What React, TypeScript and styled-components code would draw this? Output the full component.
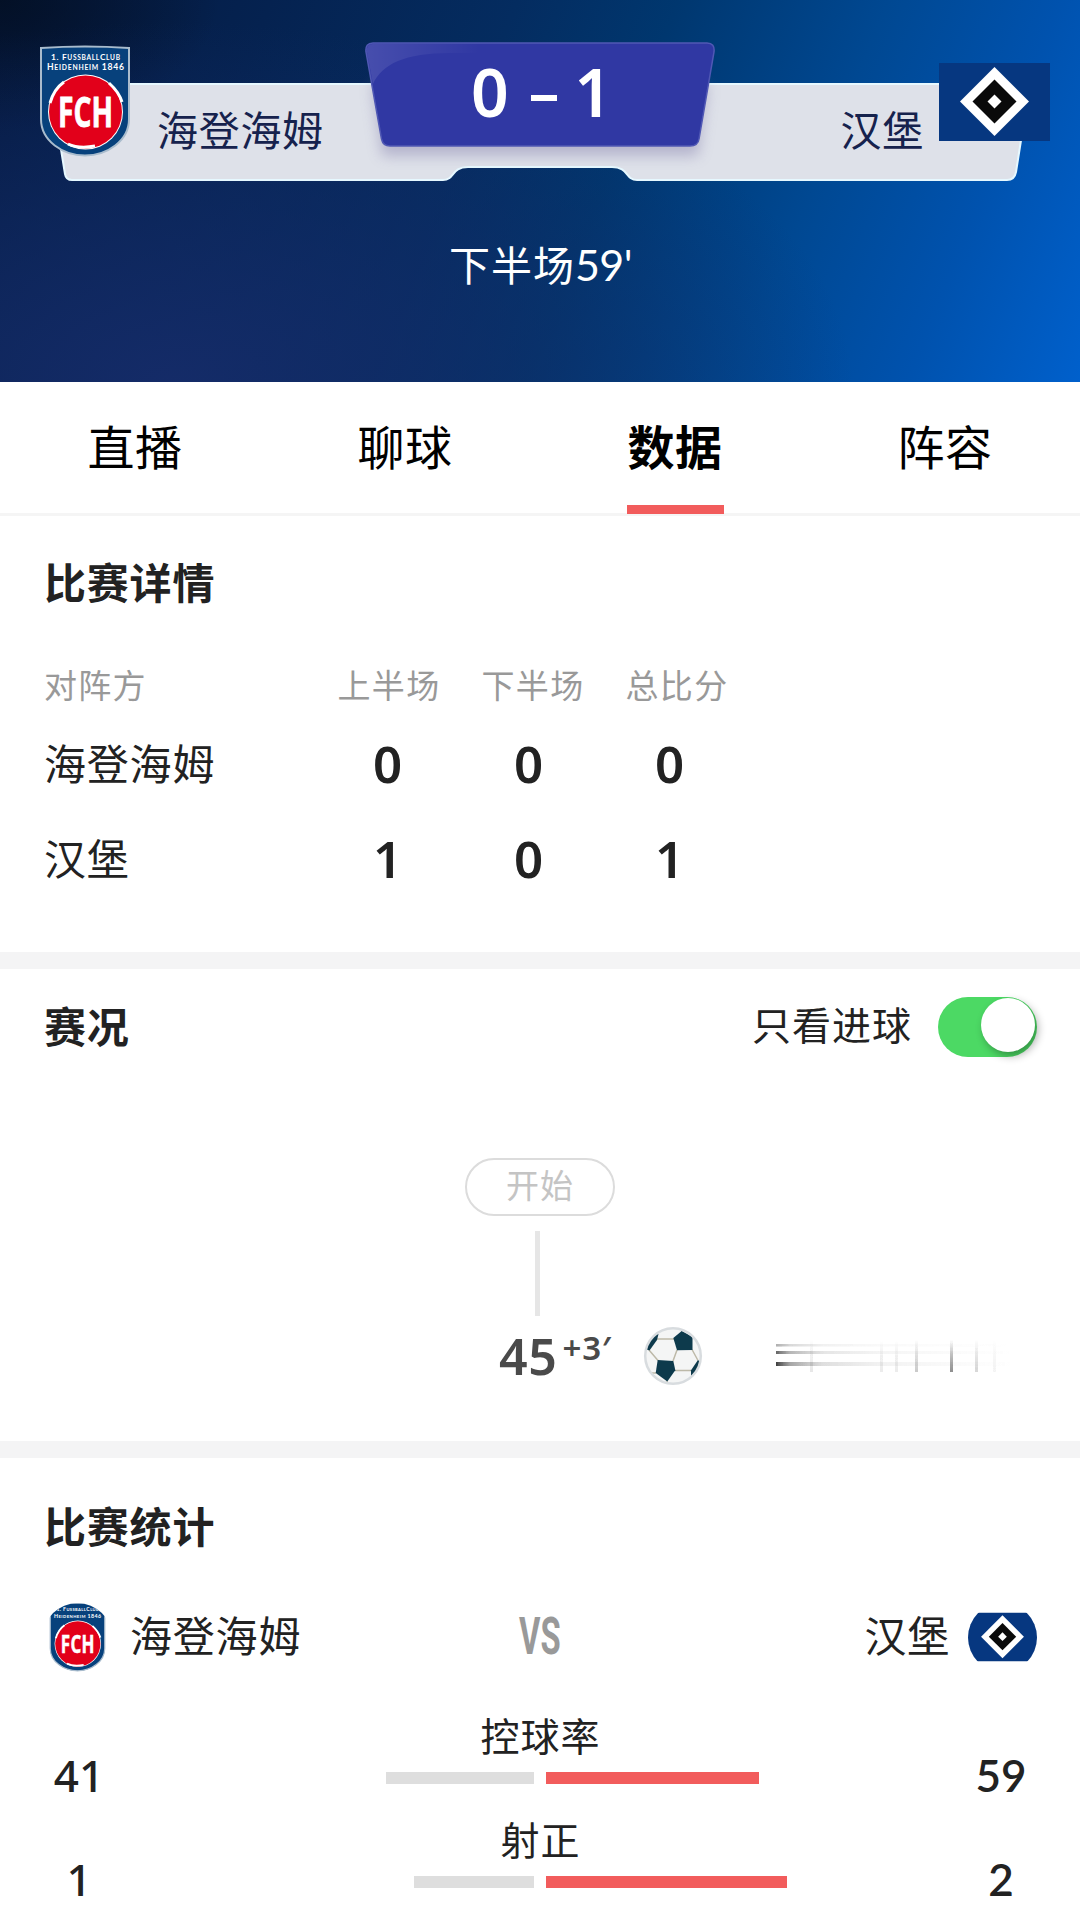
import { useState } from "react";
import styled, { createGlobalStyle } from "styled-components";

const GlobalStyle = createGlobalStyle`
  * {
    box-sizing: border-box;
  }

  body {
    margin: 0;
    background: #fff;
    color: #222;
    font-family: "Noto Sans", "Noto Sans CJK SC", sans-serif;
  }
`;

const HAN = `"Noto Sans CJK SC", sans-serif`;
const DIGITS = `"Noto Sans", "Open Sans", sans-serif`;

const Page = styled.div`
  width: 1080px;
  height: 1916px;
  overflow: hidden;
  background: #fff;
`;

/* header */

const Header = styled.header`
  height: 382px;
  background: radial-gradient(
      ellipse 680px 360px at 16% 100%,
      rgba(22, 44, 106, 0.9) 0%,
      rgba(18, 43, 102, 0.55) 50%,
      rgba(10, 45, 100, 0) 100%
    ),
    radial-gradient(
      ellipse 220px 130px at 0 0,
      rgba(3, 14, 32, 0.8) 0%,
      rgba(4, 20, 54, 0) 100%
    ),
    linear-gradient(
      112deg,
      #05193f 0%,
      #052250 22%,
      #042c60 42%,
      #00376f 55%,
      #004892 72%,
      #0052ae 86%,
      #0060cc 100%
    );
`;

const Scoreboard = styled.div`
  position: relative;
  display: grid;
  grid-template-columns: 366px 348px 366px;
  height: 196px;
`;

const BoardShape = styled.svg`
  position: absolute;
  left: 0;
  top: 0;
`;

const Side = styled.div<{ $away?: boolean }>`
  position: relative;
  display: flex;
  align-items: flex-start;
  justify-content: ${({ $away }) => ($away ? "flex-end" : "flex-start")};
  padding: ${({ $away }) => ($away ? "63px 30px 0 0" : "45px 0 0 39px")};
`;

const SideName = styled.div<{ $away?: boolean }>`
  margin: ${({ $away }) => ($away ? "35px 15px 0 0" : "53px 0 0 26px")};
  font-family: ${HAN};
  font-size: 41px;
  line-height: 60px;
  letter-spacing: 0.7px;
  color: #16224d;
`;

const Score = styled.div`
  position: relative;
  display: flex;
  justify-content: space-between;
  height: 60px;
  margin: 61px 102px 0 105px;
  color: #fff;
  font-family: ${DIGITS};
  font-size: 66px;
  font-weight: 600;
  line-height: 60px;
`;

const Dash = styled.span`
  width: 26px;
  height: 6px;
  margin: 34px 0 0 5px;
  background: #fff;
`;

const Clock = styled.div`
  padding-top: 37px;
  padding-left: 1px;
  text-align: center;
  color: #fff;
  font-family: ${HAN};
  font-size: 41px;
  line-height: 60px;
  letter-spacing: 1px;

  span {
    font-family: Lato, ${DIGITS};
    font-size: 43px;
    letter-spacing: -0.5px;
  }
`;

/* tabs */

const TabBar = styled.nav`
  display: grid;
  grid-template-columns: repeat(4, 1fr);
  height: 134px;
  border-bottom: 3px solid #f5f5f5;
`;

const Tab = styled.button<{ $active: boolean }>`
  display: flex;
  flex-direction: column;
  align-items: center;
  justify-content: space-between;
  height: 132px;
  padding: 28px 0 0;
  border: 0;
  background: none;
  color: #000;
  font-family: ${HAN};
  font-size: 47px;
  line-height: 70px;
  letter-spacing: 0.5px;
  font-weight: ${({ $active }) => ($active ? 700 : 400)};

  &::after {
    content: "";
    width: 97px;
    height: 9px;
    background: ${({ $active }) => ($active ? "#f25c5c" : "transparent")};
  }
`;

/* sections */

const Section = styled.section<{ $height: number }>`
  height: ${({ $height }) => $height}px;
  overflow: hidden;
`;

const Divider = styled.div`
  height: 17px;
  background: #f4f4f5;
`;

const Title = styled.h2`
  margin: 0;
  font-family: ${HAN};
  font-size: 42px;
  font-weight: 700;
  line-height: 60px;
  letter-spacing: 0.8px;
`;

const DetailTitle = styled(Title)`
  padding: 35px 0 0 44px;
`;

const StatsTitle = styled(Title)`
  padding: 37px 0 0 44px;
`;

const DetailRow = styled.div<{ $head?: boolean }>`
  display: grid;
  grid-template-columns: 273px repeat(3, ${({ $head }) => ($head ? 144 : 141)}px);
  align-items: center;
  height: ${({ $head }) => ($head ? 60 : 95)}px;
  margin: ${({ $head }) => ($head ? "45px 0 0 44px" : "0 0 0 44px")};
`;

const HeadCell = styled.div<{ $left?: boolean }>`
  padding-bottom: 3px;
  color: #999;
  font-family: ${HAN};
  font-size: 33px;
  line-height: 57px;
  letter-spacing: 1.3px;
  text-align: ${({ $left }) => ($left ? "left" : "center")};
`;

const NameCell = styled.div`
  padding-bottom: 4px;
  font-family: ${HAN};
  font-size: 42px;
  line-height: 60px;
  letter-spacing: 0.8px;
`;

const NumCell = styled.div`
  padding-bottom: 1px;
  font-family: ${DIGITS};
  font-size: 51px;
  font-weight: 600;
  line-height: 60px;
  text-align: center;
`;

/* events */

const EventsHead = styled.div`
  display: flex;
  align-items: center;
  justify-content: space-between;
  height: 116px;
  padding: 0 43px 0 44px;
`;

const EventsTitle = styled(Title)`
  padding-bottom: 5px;
`;

const Filter = styled.label`
  display: flex;
  align-items: center;
  gap: 26px;
  font-family: ${HAN};
  font-size: 39px;
  letter-spacing: 1px;
`;

const FilterText = styled.span`
  height: 60px;
  line-height: 52px;
`;

const Switch = styled.button<{ $on: boolean }>`
  display: flex;
  justify-content: ${({ $on }) => ($on ? "flex-end" : "flex-start")};
  width: 99px;
  height: 60px;
  padding: 1px 2px;
  border: 0;
  border-radius: 30px;
  background: ${({ $on }) => ($on ? "#4cd964" : "#ddd")};
`;

const Knob = styled.span`
  width: 54px;
  height: 54px;
  border-radius: 50%;
  background: #fff;
  box-shadow: 3px 4px 9px rgba(0, 0, 0, 0.32);
`;

const Timeline = styled.div`
  display: flex;
  flex-direction: column;
  align-items: center;
  padding-top: 73px;
`;

const StartPill = styled.div`
  width: 150px;
  height: 58px;
  border: 2px solid #dcdcdc;
  border-radius: 29px;
  color: #c4c4c4;
  font-family: ${HAN};
  font-size: 33px;
  line-height: 48px;
  letter-spacing: 1px;
  text-align: center;
`;

const Stem = styled.div`
  width: 5px;
  height: 85px;
  margin: 15px 5px 0 0;
  background: #e6e6e6;
`;

const EventRow = styled.div`
  display: flex;
  align-items: center;
  align-self: stretch;
  height: 80px;
  padding-left: 499px;
`;

const Minute = styled.div`
  display: flex;
  width: 144px;
  color: #4a4a4a;
  font-family: ${DIGITS};
  font-size: 50px;
  font-weight: 600;
  line-height: 68px;
  letter-spacing: 0.7px;

  span {
    margin: -8px 0 0 5px;
    font-size: 33px;
    font-weight: 600;
  }
`;

const Trace = styled.svg`
  margin: 0 0 3px 73px;
`;

/* statistics */

const Versus = styled.div`
  display: grid;
  grid-template-columns: 1fr 60px 1fr;
  align-items: center;
  height: 80px;
  margin-top: 42px;
  padding: 0 43px;
`;

const Team = styled.div<{ $away?: boolean }>`
  display: flex;
  align-items: center;
  justify-content: ${({ $away }) => ($away ? "flex-end" : "flex-start")};
  gap: 18px;
  font-family: ${HAN};
  font-size: 42px;
  letter-spacing: 0.8px;
`;

const TeamName = styled.span`
  height: 60px;
  line-height: 54px;
`;

const Round = styled.div`
  display: flex;
  align-items: center;
  justify-content: center;
  width: 69px;
  height: 69px;
  border-radius: 50%;
  overflow: hidden;
`;

const Vs = styled.div`
  color: #999;
  font-family: Roboto, sans-serif;
  font-size: 52px;
  font-weight: 700;
  line-height: 60px;
  text-align: center;
  transform: translateX(-2px) scaleX(0.63);
`;

const StatList = styled.div`
  padding-top: 29px;
`;

const StatRow = styled.div`
  display: grid;
  grid-template-columns: 158px 1fr 158px;
  height: 104px;
`;

const StatValue = styled.div`
  padding-top: 39px;
  font-family: Lato, ${DIGITS};
  font-size: 44px;
  font-weight: 600;
  line-height: 60px;
  text-align: center;
`;

const HomeValue = styled(StatValue)`
  font-family: ${DIGITS};
  font-weight: 500;
`;

const StatLabel = styled.div`
  padding-left: 1px;
  font-family: ${HAN};
  font-size: 39px;
  line-height: 56px;
  letter-spacing: 1px;
  text-align: center;
`;

const Bars = styled.div`
  display: grid;
  grid-template-columns: 376px 1fr;
  column-gap: 12px;
  margin-top: 10px;
`;

const Bar = styled.div<{ $away?: boolean }>`
  height: 12px;
  justify-self: ${({ $away }) => ($away ? "start" : "end")};
  background: ${({ $away }) => ($away ? "#f25c5c" : "#dedede")};
`;

const TABS = ["直播", "聊球", "数据", "阵容"];

const RESULTS = [
  { name: "海登海姆", scores: [0, 0, 0] },
  { name: "汉堡", scores: [1, 0, 1] },
];

const STATS = [
  { label: "控球率", home: 41, away: 59 },
  { label: "射正", home: 1, away: 2 },
];

// combined length of both bars in a row
const BAR_TOTAL = 361;

const FchCrest = ({ width, height }: { width: number; height: number }) => (
  <svg width={width} height={height} viewBox="0 0 92 112" overflow="visible">
    <path
      d="M2 3 Q46 0 90 3 V74 C90 96 68 110.500 46 110.500 C24 110.500 2 96 2 74 Z"
      fill="#07417c"
      stroke="#a9bccd"
      strokeWidth="2"
    />
    <g fill="#fff" fontFamily="Lato, sans-serif" fontWeight="700">
      <text x="12" y="14.500" fontSize="8.4" textLength="69">
        1. F<tspan fontSize="6.6">USSBALL</tspan>C<tspan fontSize="6.6">LUB</tspan>
      </text>
      <text x="8" y="25" fontSize="8.6" textLength="77">
        H<tspan fontSize="6.8">EIDENHEIM</tspan> 1846
      </text>
    </g>
    <circle cx="46.500" cy="67" r="37.500" fill="#fff" />
    <circle cx="46.500" cy="67" r="36.500" fill="#e2001a" />
    <g fill="none" stroke="#fff" strokeWidth="3">
      <path d="M11 58 Q15 44 25 37" />
      <path d="M70 38 Q80 47 83 57" />
      <path d="M29 99 Q40 104 56 101" />
    </g>
    <text
      x="19"
      y="82"
      fill="#fff"
      stroke="#fff"
      strokeWidth="0.800"
      fontFamily="'Open Sans', sans-serif"
      fontSize="41"
      fontWeight="700"
      textLength="55"
      lengthAdjust="spacingAndGlyphs"
    >
      FCH
    </text>
  </svg>
);

const HsvLogo = ({ width, height }: { width: number; height: number }) => (
  <svg width={width} height={height} viewBox="0 0 111 78">
    <rect width="111" height="78" fill="#063780" />
    <path d="M55.500 4 L90 38.500 L55.500 73 L21 38.500 Z" fill="#fff" />
    <path d="M55.500 16.500 L77.500 38.500 L55.500 60.500 L33.500 38.500 Z" fill="#0a0a0a" />
    <path d="M55.500 31.500 L62.500 38.500 L55.500 45.500 L48.500 38.500 Z" fill="#fff" />
  </svg>
);

const Board = () => (
  <BoardShape width="1080" height="196" viewBox="0 0 1080 196">
    <defs>
      <linearGradient id="gloss" x1="0" y1="0" x2="1" y2="0">
        <stop offset="0" stopColor="#fff" stopOpacity="0.11" />
        <stop offset="1" stopColor="#fff" stopOpacity="0" />
      </linearGradient>
      <filter id="soft" x="-10%" y="-10%" width="120%" height="150%">
        <feGaussianBlur stdDeviation="7" />
      </filter>
    </defs>
    <path
      d="M60 84 H1020 Q1030 84 1028 96 L1016 172 Q1014.500 180 1007 180 H637 C625 180 629 167 612 167 H468 C451 167 455 180 443 180 H72 Q66 180 65 174 L52 94 Q51 84 60 84 Z"
      fill="#dee1e9"
      stroke="#e6f8ff"
      strokeWidth="2"
    />
    <path
      d="M372 84 H708 L698 156 H382 Z"
      fill="#7c76a6"
      opacity="0.42"
      filter="url(#soft)"
    />
    <path
      d="M373 43 H707 Q715 43 714 52 L699 139 Q698 146 690 146 H390 Q383 146 381.500 139 L366 52 Q365 43 373 43 Z"
      fill="#3038a3"
      stroke="#5058b4"
      strokeWidth="1.500"
    />
    <path
      d="M373 44 H480 V53 H450 C405 53 382 64 373 84 L367 52 Q366 44 373 44 Z"
      fill="url(#gloss)"
    />
  </BoardShape>
);

const Ball = () => (
  <svg width="60" height="60" viewBox="0 0 60 60">
    <defs>
      <clipPath id="ball">
        <circle cx="30" cy="30" r="28" />
      </clipPath>
    </defs>
    <circle cx="30" cy="30" r="28" fill="#f4f5f5" />
    <g clipPath="url(#ball)">
      <path
        d="M14 13 H31 M6 24 L15 34.500 M34 24 L30 35 M49 23.500 L55 34.500 M32 44.500 H48 M7 47 H13 M24 54 V60"
        fill="none"
        stroke="#bdb9a8"
        strokeWidth="1.500"
      />
      <path d="M38.700 5 L49.500 11 V24 L34 24.300 L30.300 12 Z" fill="#0d3a4c" />
      <path d="M14.700 34 L30.300 35 L32.300 44.300 L24.300 55.500 L12.700 47 Z" fill="#0d3a4c" />
      <path d="M15.500 8 L14 14 L6.500 24.500 L2 23 L8 10 Z" fill="#0d3a4c" />
      <path d="M55 34 L58 37 L54 47 L48 51 L48 44.300 Z" fill="#0d3a4c" />
    </g>
    <circle cx="30" cy="30" r="27.800" fill="none" stroke="#d8dcdf" strokeWidth="2.500" />
  </svg>
);

const TRACE_LINES = [
  { y: 9, h: 2.5, opacity: 0.35 },
  { y: 16, h: 3, opacity: 0.65 },
  { y: 27, h: 4, opacity: 0.8 },
];

const TRACE_BARS = [
  { x: 34, w: 3, opacity: 0.12 },
  { x: 104, w: 3, opacity: 0.1 },
  { x: 119, w: 3, opacity: 0.1 },
  { x: 139, w: 3, opacity: 0.26 },
  { x: 174, w: 3, opacity: 0.55 },
  { x: 199, w: 3, opacity: 0.2 },
  { x: 217, w: 3, opacity: 0.05 },
];

// the scorer's name, smeared out into faded streaks
const ScorerTrace = () => (
  <Trace width="240" height="40" viewBox="0 0 240 40">
    <defs>
      <linearGradient id="fadeX" x1="0" y1="0" x2="1" y2="0">
        <stop offset="0" stopColor="#111" />
        <stop offset="0.06" stopColor="#333" stopOpacity="0.55" />
        <stop offset="0.2" stopColor="#555" stopOpacity="0.24" />
        <stop offset="0.45" stopColor="#888" stopOpacity="0.13" />
        <stop offset="1" stopColor="#999" stopOpacity="0" />
      </linearGradient>
      <linearGradient id="fadeY" x1="0" y1="0" x2="0" y2="1">
        <stop offset="0" stopColor="#333" stopOpacity="0" />
        <stop offset="0.5" stopColor="#333" stopOpacity="0.6" />
        <stop offset="1" stopColor="#333" />
      </linearGradient>
      <filter id="smear" x="-5%" y="-5%" width="110%" height="110%">
        <feGaussianBlur stdDeviation="0.700" />
      </filter>
    </defs>
    <g filter="url(#smear)">
      {TRACE_LINES.map(({ y, h, opacity }) => (
        <rect key={y} x="0" y={y} width="236" height={h} fill="url(#fadeX)" opacity={opacity} />
      ))}
      {TRACE_BARS.map(({ x, w, opacity }) => (
        <rect key={x} x={x} y="5" width={w} height="32" fill="url(#fadeY)" opacity={opacity} />
      ))}
    </g>
  </Trace>
);

const App = () => {
  const [tab, setTab] = useState("数据");
  const [goalsOnly, setGoalsOnly] = useState(true);

  return (
    <Page>
      <GlobalStyle />
      <Header>
        <Scoreboard>
          <Board />
          <Side>
            <FchCrest width={92} height={112} />
            <SideName>海登海姆</SideName>
          </Side>
          <Score>
            <span>0</span>
            <Dash />
            <span>1</span>
          </Score>
          <Side $away>
            <SideName $away>汉堡</SideName>
            <HsvLogo width={111} height={78} />
          </Side>
        </Scoreboard>
        <Clock>
          下半场<span>59'</span>
        </Clock>
      </Header>

      <TabBar>
        {TABS.map((name) => (
          <Tab key={name} $active={name === tab} onClick={() => setTab(name)}>
            {name}
          </Tab>
        ))}
      </TabBar>

      <Section $height={436}>
        <DetailTitle>比赛详情</DetailTitle>
        <DetailRow $head>
          <HeadCell $left>对阵方</HeadCell>
          <HeadCell>上半场</HeadCell>
          <HeadCell>下半场</HeadCell>
          <HeadCell>总比分</HeadCell>
        </DetailRow>
        {RESULTS.map(({ name, scores }) => (
          <DetailRow key={name}>
            <NameCell>{name}</NameCell>
            {scores.map((score, i) => (
              <NumCell key={i}>{score}</NumCell>
            ))}
          </DetailRow>
        ))}
      </Section>
      <Divider />

      <Section $height={472}>
        <EventsHead>
          <EventsTitle>赛况</EventsTitle>
          <Filter>
            <FilterText>只看进球</FilterText>
            <Switch $on={goalsOnly} onClick={() => setGoalsOnly(!goalsOnly)}>
              <Knob />
            </Switch>
          </Filter>
        </EventsHead>
        <Timeline>
          <StartPill>开始</StartPill>
          <Stem />
          <EventRow>
            <Minute>
              45<span>+3′</span>
            </Minute>
            <Ball />
            <ScorerTrace />
          </EventRow>
        </Timeline>
      </Section>
      <Divider />

      <Section $height={458}>
        <StatsTitle>比赛统计</StatsTitle>
        <Versus>
          <Team>
            <Round>
              <FchCrest width={57} height={70} />
            </Round>
            <TeamName>海登海姆</TeamName>
          </Team>
          <Vs>VS</Vs>
          <Team $away>
            <TeamName>汉堡</TeamName>
            <Round>
              <HsvLogo width={71} height={50} />
            </Round>
          </Team>
        </Versus>
        <StatList>
          {STATS.map(({ label, home, away }) => {
            const unit = BAR_TOTAL / (home + away);
            return (
              <StatRow key={label}>
                <HomeValue>{home}</HomeValue>
                <div>
                  <StatLabel>{label}</StatLabel>
                  <Bars>
                    <Bar style={{ width: home * unit }} />
                    <Bar $away style={{ width: away * unit }} />
                  </Bars>
                </div>
                <StatValue>{away}</StatValue>
              </StatRow>
            );
          })}
        </StatList>
      </Section>
    </Page>
  );
};

export default App;
